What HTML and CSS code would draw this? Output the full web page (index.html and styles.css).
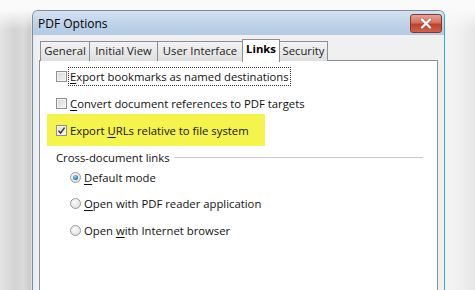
FILE: index.html
```html
<!DOCTYPE html>
<html lang="en">
<head>
  <meta charset="UTF-8" />
  <title>PDF Options</title>
  <link rel="stylesheet" href="styles.css">
</head>
<body>

  <div class="window">
    <div class="titlebar">
      <span class="title">PDF Options</span>
      <div class="close-btn">
        <svg width="14" height="11" viewBox="0 0 14 11">
          <path d="M3 1.5 L11 9.5 M11 1.5 L3 9.5" stroke="#6d2218" stroke-width="3.6" stroke-linecap="round" opacity="0.35"/>
          <path d="M3 1.5 L11 9.5 M11 1.5 L3 9.5" stroke="#fff" stroke-width="2.4" stroke-linecap="round"/>
        </svg>
      </div>
    </div>

    <div class="client">
      <div class="tabs">
        <div class="tab tab-general">General</div>
        <div class="tab tab-view">Initial View</div>
        <div class="tab tab-ui">User Interface</div>
        <div class="tab tab-links active">Links</div>
        <div class="tab tab-security">Security</div>
      </div>

      <div class="panel">
        <div class="row">
          <span class="box"></span>
          <span class="text focus"><u>E</u>xport bookmarks as named destinations</span>
        </div>
        <div class="row">
          <span class="box"></span>
          <span class="text"><u>C</u>onvert document references to PDF targets</span>
        </div>
        <div class="row marked">
          <span class="box checked">
            <svg width="9" height="9" viewBox="0 0 9 9"><path d="M1.5 4.8 L3.6 7 L7.6 1.6" fill="none" stroke="#3c3c3c" stroke-width="1.5"/></svg>
          </span>
          <span class="text">Export <u>U</u>RLs relative to file system</span>
        </div>

        <div class="group-title">
          <span>Cross-document links</span>
          <span class="rule"></span>
        </div>

        <div class="radios">
          <div class="radio-row">
            <span class="radio on"></span>
            <span class="text"><u>D</u>efault mode</span>
          </div>
          <div class="radio-row">
            <span class="radio"></span>
            <span class="text"><u>O</u>pen with PDF reader application</span>
          </div>
          <div class="radio-row">
            <span class="radio"></span>
            <span class="text">Open <u>w</u>ith Internet browser</span>
          </div>
        </div>
      </div>
    </div>
  </div>

</body>
</html>
```

FILE: styles.css
```css
* { box-sizing: border-box; margin: 0; padding: 0; }

body {
  width: 475px;
  height: 290px;
  overflow: hidden;
  font-family: 'Open Sans', 'Liberation Sans', sans-serif;
  font-size: 11.3px;
  color: #111;
  padding: 10px 0 0 32px;
  background:
    linear-gradient(to bottom, #fafafa 0, #fafafa 10px, rgba(250,250,250,0) 30px),
    linear-gradient(to right, #e4e4e4 0, #d3d3d3 14px, #dadada 24px, #c9c9c9 31px, #f6f6f6 32px, #f4f4f4 446px, #f0f0f0 460px, #e6e6e6 475px);
}

.window {
  width: 413px;
  height: 280px;
  border: 1px solid #7f8c9b;
  border-bottom: none;
  border-right-color: #3aa8d8;
  border-radius: 6px 6px 0 0;
  background: #e8eef5;
  display: flex;
  flex-direction: column;
}

.titlebar {
  height: 24px;
  display: flex;
  align-items: flex-start;
  justify-content: space-between;
  padding: 0 2px 0 5px;
  background: linear-gradient(#d4e2f1, #bcd1e8 60%, #b2cae5);
  border-radius: 5px 5px 0 0;
}

.title {
  font-size: 12px;
  line-height: 25px;
  color: #000;
}

.close-btn {
  width: 32px;
  height: 19px;
  margin-top: 3px;
  border: 1px solid #7c3b30;
  border-radius: 3px;
  background: linear-gradient(#e6a597, #d4715e 45%, #c2402a 55%, #d1624a);
  display: flex;
  align-items: center;
  justify-content: center;
}

.client {
  flex: 1;
  display: flex;
  flex-direction: column;
  padding: 4px 6px 0 6px;
  background: linear-gradient(to right, #e6ecf2 0, #eff1f4 5px, #f0f0f0 6px);
}

.tabs {
  display: flex;
  align-items: flex-end;
  height: 22px;
  padding-left: 1px;
  margin-bottom: -1px;
  position: relative;
  z-index: 1;
}

.tab {
  height: 20px;
  line-height: 18px;
  text-align: center;
  border: 1px solid #8c8e94;
  border-bottom: none;
  margin-right: -1px;
  background: linear-gradient(#f3f3f3, #e9e9e9 50%, #dedede);
  color: #222;
  white-space: nowrap;
}

.tab-general { width: 50px; }
.tab-view { width: 69px; }
.tab-ui { width: 86px; }
.tab-links { width: 38px; }
.tab-security { width: 49px; }

.tab.active {
  height: 23px;
  margin-bottom: -1px;
  background: #fff;
  font-weight: bold;
  color: #000;
}

.panel {
  flex: 1;
  background: #fff;
  border: 1px solid #8c8e94;
  border-bottom: none;
  padding: 2px 0 0 16px;
}

.row {
  height: 27px;
  display: flex;
  align-items: center;
  gap: 3px;
}

.row.marked {
  width: 218px;
  height: 32px;
  margin: -3px 0 -2px -9px;
  padding-left: 9px;
  background: #f5f44d;
}

.box {
  width: 11px;
  height: 11px;
  border: 1px solid #8e8f8f;
  background: linear-gradient(135deg, #d8d8d8, #f4f4f4);
  box-shadow: inset 0 0 0 1px #f4f4f4;
  display: flex;
  align-items: center;
  justify-content: center;
}

.box.checked {
  background: linear-gradient(135deg, #dedede, #f7f7f7);
}

.text {
  color: #111;
  white-space: nowrap;
}

.text u {
  text-underline-offset: 2px;
}

.focus {
  outline: 1px dotted #333;
  outline-offset: 1px;
}

.group-title {
  display: flex;
  align-items: center;
  height: 20px;
  margin-top: 3px;
  padding-right: 14px;
  gap: 4px;
}

.group-title .rule {
  flex: 1;
  border-top: 1px solid #c9c9c9;
  margin-top: 1px;
}

.radios {
  display: flex;
  flex-direction: column;
  gap: 6.5px;
  padding-left: 14px;
}

.radio-row {
  height: 20px;
  display: flex;
  align-items: center;
  gap: 3px;
}

.radio {
  width: 11px;
  height: 11px;
  border-radius: 50%;
  border: 1px solid #999;
  background: radial-gradient(circle at 40% 35%, #fcfcfc, #d9d9d9);
  position: relative;
}

.radio.on::after {
  content: "";
  position: absolute;
  left: 2px;
  top: 2px;
  width: 5px;
  height: 5px;
  border-radius: 50%;
  background: radial-gradient(circle at 40% 35%, #8fd0f5, #2273b4 70%, #1b4f85);
}
```
